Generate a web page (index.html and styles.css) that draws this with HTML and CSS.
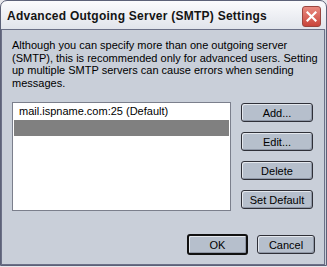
FILE: index.html
```html
<!DOCTYPE html>
<html lang="en">
<head>
    <meta charset="UTF-8">
    <title>Advanced Outgoing Server (SMTP) Settings</title>
    <link rel="stylesheet" href="styles.css">
</head>
<body>
    <div class="window">
        <div class="titlebar">
            <span class="title">Advanced Outgoing Server (SMTP) Settings</span>
            <span class="close">
                <svg width="11" height="11" viewBox="0 0 11 11">
                    <path d="M1.5 1.5 L9.5 9.5 M9.5 1.5 L1.5 9.5" stroke="#fff" stroke-width="2.2" stroke-linecap="square"/>
                </svg>
            </span>
        </div>
        <div class="content">
            <p class="info">Although you can specify more than one outgoing server<br>
                (SMTP), this is recommended only for advanced users. Setting<br>
                up multiple SMTP servers can cause errors when sending<br>
                messages.</p>
            <div class="main">
                <ul class="servers">
                    <li>mail.ispname.com:25 (Default)</li>
                    <li class="selected">&nbsp;</li>
                </ul>
                <div class="side">
                    <button class="btn">Add...</button>
                    <button class="btn">Edit...</button>
                    <button class="btn">Delete</button>
                    <button class="btn">Set Default</button>
                </div>
            </div>
            <div class="footer">
                <button class="btn default">OK</button>
                <button class="btn small">Cancel</button>
            </div>
        </div>
    </div>
</body>
</html>
```

FILE: styles.css
```css
body {
    margin: 0;
    background: #e8e8ec;
    font-family: "Liberation Sans", Arial, sans-serif;
    font-size: 11px;
    color: #000;
}
.window {
    box-sizing: border-box;
    width: 327px;
    height: 266px;
    border: 1px solid #5c6178;
    border-radius: 7px 7px 0 0;
    background: linear-gradient(#fbfbfd, #e1e4eb 28px, #c9cfd9 29px);
    display: flex;
    flex-direction: column;
}
.titlebar {
    height: 28px;
    display: flex;
    align-items: center;
    padding-left: 6px;
    padding-right: 5px;
}
.title {
    flex: 1;
    white-space: nowrap;
    font-family: "Liberation Sans", Arial, sans-serif;
    font-weight: bold;
    font-size: 12px;
    letter-spacing: 0.25px;
    color: #141414;
    padding-top: 1px;
}
.close {
    box-sizing: border-box;
    width: 19px;
    height: 21px;
    margin-top: 2px;
    border: 1px solid #9a4640;
    border-radius: 3px;
    background: linear-gradient(#e98a80, #c9453c);
    display: flex;
    align-items: center;
    justify-content: center;
}
.close svg {
    display: block;
}
.content {
    flex: 1;
    margin: 0 1px 0 0;
    border: 1px solid #6b7087;
    background: #c9cfd9;
    padding: 9px 9px 0 10px;
    display: flex;
    flex-direction: column;
}
.info {
    margin: 0;
    white-space: nowrap;
    line-height: 12.5px;
    height: 52px;
}
.main {
    display: flex;
    gap: 10px;
    margin-top: 11px;
}
.servers {
    box-sizing: border-box;
    width: 219px;
    height: 109px;
    margin: 0;
    padding: 1px;
    list-style: none;
    background: #fff;
    border: 1px solid #7b7f8c;
}
.servers li {
    height: 16px;
    line-height: 14px;
    padding-left: 5px;
}
.servers li.selected {
    background: #808080;
}
.side {
    display: flex;
    flex-direction: column;
    gap: 10px;
    padding-top: 1px;
}
.btn {
    box-sizing: border-box;
    width: 72px;
    height: 19px;
    padding: 0;
    font-family: "Liberation Sans", Arial, sans-serif;
    font-size: 11px;
    color: #000;
    border: 1px solid #2f3038;
    border-radius: 3px;
    background: #b6bfcc;
    box-shadow: inset 1px 1px #e4e8ee, inset -1px -1px #8f97a6;
}
.footer {
    display: flex;
    justify-content: flex-end;
    align-items: center;
    gap: 9px;
    margin-top: 23px;
}
.btn.default {
    width: 61px;
    height: 21px;
    border: 2px solid #111;
}
.btn.small {
    width: 58px;
}
```
